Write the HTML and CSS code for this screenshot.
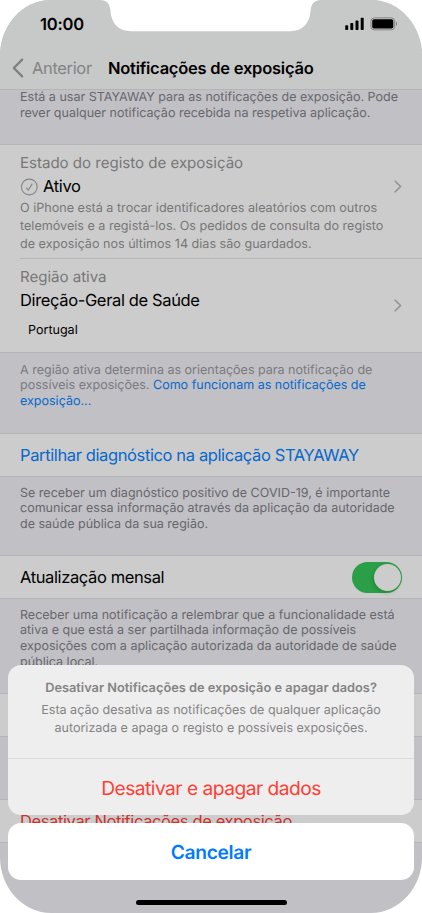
FILE: index.html
```html
<!DOCTYPE html>
<html lang="pt">
<head>
<meta charset="utf-8">
<title>Notificações de exposição</title>
<link rel="stylesheet" href="styles.css">
</head>
<body>
<main class="phone">
  <header class="top">
    <div class="status">
      <span class="time">10:00</span>
      <svg class="indicators" width="54" height="14" viewBox="0 0 54 14">
        <rect x="0.2" y="8.2" width="3" height="4.9" rx="0.8"/>
        <rect x="5.3" y="6" width="3" height="7.1" rx="0.8"/>
        <rect x="10.5" y="3.4" width="3" height="9.7" rx="0.8"/>
        <rect x="15.7" y="0.8" width="3" height="12.3" rx="0.8"/>
        <rect class="shell" x="25.9" y="0.9" width="23.7" height="11.9" rx="3.3"/>
        <rect x="27.2" y="2.2" width="21.1" height="9.3" rx="1.8"/>
        <path class="cap" d="M51 4.6c1.5.7 1.5 3.8 0 4.5z"/>
      </svg>
    </div>
    <nav class="nav">
      <svg class="back" width="12" height="20" viewBox="0 0 12 20"><path d="M10.2 1.6 1.8 10l8.4 8.4"/></svg>
      <span class="previous">Anterior</span>
      <h1 class="title">Notificações de exposição</h1>
    </nav>
  </header>

  <p class="note note-first">Está a usar STAYAWAY para as notificações de exposição. Pode<br>rever qualquer notificação recebida na respetiva aplicação.</p>

  <section class="group">
    <div class="cell state">
      <div class="cell-body">
        <div class="label">Estado do registo de exposição</div>
        <div class="value active">
          <svg width="18" height="18" viewBox="0 0 18 18"><circle cx="9.300" cy="9" r="7.900"/><path d="m6.200 9.600 2.100 2.500 4-6.500"/></svg>
          <span>Ativo</span>
        </div>
        <p class="detail">O iPhone está a trocar identificadores aleatórios com outros<br>telemóveis e a registá-los. Os pedidos de consulta do registo<br>de exposição nos últimos 14 dias são guardados.</p>
      </div>
      <svg class="chevron" width="8" height="13" viewBox="0 0 8 13"><path d="m1.200 1.200 5.400 5.300-5.400 5.300"/></svg>
    </div>
    <div class="cell region">
      <div class="cell-body">
        <div class="label">Região ativa</div>
        <div class="value">Direção-Geral de Saúde</div>
        <div class="country">Portugal</div>
      </div>
      <svg class="chevron" width="8" height="13" viewBox="0 0 8 13"><path d="m1.200 1.200 5.400 5.300-5.400 5.300"/></svg>
    </div>
  </section>
  <p class="note note-region">A região ativa determina as orientações para notificação de<br>possíveis exposições. <a>Como funcionam as notificações de<br>exposição...</a></p>

  <section class="group row"><span class="link">Partilhar diagnóstico na aplicação STAYAWAY</span></section>
  <p class="note note-share">Se receber um diagnóstico positivo de COVID-19, é importante<br>comunicar essa informação através da aplicação da autoridade<br>de saúde pública da sua região.</p>

  <section class="group row"><span>Atualização mensal</span><span class="switch"></span></section>
  <p class="note note-month">Receber uma notificação a relembrar que a funcionalidade está<br>ativa e que está a ser partilhada informação de possíveis<br>exposições com a aplicação autorizada da autoridade de saúde<br>pública local.</p>

  <section class="group row"></section>
  <div class="gap"></div>
  <section class="group row"><span class="disable">Desativar Notificações de exposição</span></section>

  <svg class="notch" width="224" height="32" viewBox="0 0 224 32"><path d="M0 0c6.500 0 10 3.500 10.500 11.500C11.500 24 19 31.200 31 31.200H190c12 0 19.500-7.200 20.500-19.700C211 3.500 214.500 0 221 0z"/></svg>

  <div class="sheet">
    <div class="alert">
      <div class="message">
        <h2>Desativar Notificações de exposição e apagar dados?</h2>
        <p>Esta ação desativa as notificações de qualquer aplicação<br>autorizada e apaga o registo e possíveis exposições.</p>
      </div>
      <div class="confirm"><span>Desativar e apagar dados</span></div>
    </div>
    <div class="cancel"><span>Cancelar</span></div>
    <div class="home"></div>
  </div>
</main>
</body>
</html>
```
FILE: styles.css
```css
* { box-sizing: border-box; }
body { margin: 0; background: #fff; font-family: Inter, "Liberation Sans", sans-serif; color: #000; text-rendering: geometricPrecision; }
h1, h2, p { margin: 0; font-weight: 400; }
svg { display: block; flex: none; }
.phone { position: relative; width: 422px; height: 913px; overflow: hidden; background: #c1c0c5; border-radius: 51px / 56px; white-space: nowrap; }

.top { height: 90px; background: #c7c8c8; border-bottom: 1px solid #b3b3b5; }
.status { height: 47px; padding: 0 23px 0 40px; display: flex; justify-content: space-between; align-items: center; }
.time { font-size: 16.5px; font-weight: 600; letter-spacing: -.2px; }
.shell { fill: none; stroke: #828383; stroke-width: 1; }
.cap { fill: #828383; }
.nav { height: 42px; padding-left: 12px; display: flex; align-items: center; }
.back path { fill: none; stroke: #7d7e7e; stroke-width: 2.2; stroke-linecap: round; stroke-linejoin: round; }
.previous { width: 76px; margin-left: 8px; font-size: 16.5px; letter-spacing: -.35px; color: #838484; }
.title { font-size: 16.5px; font-weight: 600; letter-spacing: -.24px; }

.note { padding: 8.5px 20px 0; font-size: 12.53px; line-height: 15.8px; color: #67676b; }
.note a { color: #0768cb; }
.note-first { height: 54px; padding-top: 0; }
.note-region { height: 80px; padding-top: 9.5px; color: #7a7a7f; }
.note-share { height: 78px; }
.note-month { height: 94px; }

.group { background: #ccc; border: solid #b5b5b8; border-width: 1px 0; }
.row { height: 44px; padding: 0 20px; display: flex; align-items: center; justify-content: space-between; font-size: 16.5px; letter-spacing: -.38px; }
.cell { display: flex; align-items: center; justify-content: space-between; margin-left: 20px; padding-right: 20px; }
.state { height: 114px; padding-top: 6px; align-items: flex-start; border-bottom: 1px solid #b5b5b8; }
.state .chevron { margin-top: 29px; }
.region { height: 93px; }
.region .cell-body { align-self: flex-start; padding-top: 6px; }
.label { font-size: 15.1px; line-height: 24px; letter-spacing: -.03px; color: #777; }
.value { font-size: 16.5px; line-height: 23px; letter-spacing: -.36px; }
.active { display: flex; align-items: center; gap: 5px; }
.active svg { fill: none; stroke: #868686; stroke-width: 1.1; }
.detail { padding-top: 2px; font-size: 12.6px; line-height: 17.8px; color: #777; }
.country { padding: 11px 0 0 8px; font-size: 12.55px; line-height: 16px; }
.chevron path { fill: none; stroke: #929292; stroke-width: 1.6; stroke-linecap: round; stroke-linejoin: round; }
.link { color: #0768cb; }
.disable { color: #cd322c; }
.switch { width: 50px; height: 31px; padding: 2px; border-radius: 16px; background: #2a9f47; }
.switch::after { content: ""; display: block; width: 27px; height: 27px; margin-left: 20px; border-radius: 50%; background: #ccc; box-shadow: -1px 2px 4px rgba(0, 0, 0, .15); }
.gap { height: 62px; }

.notch { position: absolute; left: 100px; top: 0; fill: #fff; }
.sheet { position: absolute; left: 8px; top: 665px; width: 406px; text-align: center; }
.alert, .cancel { border-radius: 13px; }
.alert { height: 150px; background: #eee; }
.message { height: 94px; padding-top: 14.5px; border-bottom: 1px solid #dcdcdc; font-size: 12.55px; line-height: 18px; color: #848484; }
.message h2 { font-size: 12.8px; font-weight: 600; line-height: 18px; margin-bottom: 4px; }
.confirm, .cancel { height: 56px; display: flex; align-items: center; justify-content: center; font-size: 19.2px; letter-spacing: -.52px; }
.confirm { padding-top: 1px; color: #ff3e34; }
.cancel { margin-top: 8px; height: 57px; background: #fff; color: #007aff; font-weight: 600; letter-spacing: -.3px; }
.home { width: 151px; height: 5px; margin: 20px auto 0; border-radius: 3px; background: #000; }
```
